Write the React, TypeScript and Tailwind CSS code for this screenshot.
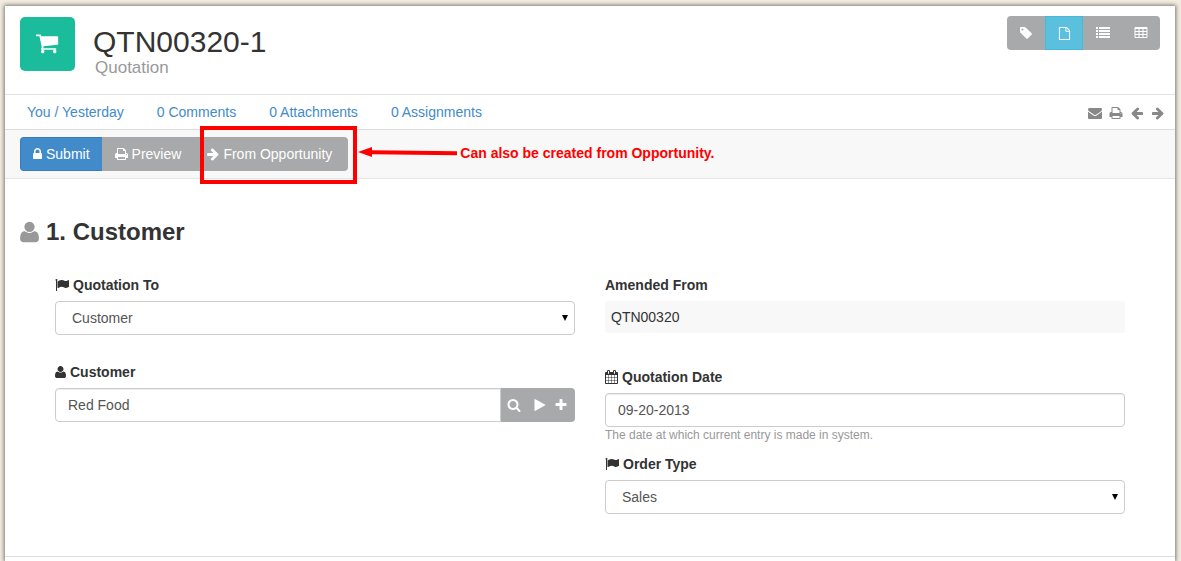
import type { ReactNode } from "react";

type IconProps = { className: string; viewBox?: string; d: string; transform?: string };

function Icon({ className, viewBox = "0 0 1792 1792", d, transform }: IconProps) {
  return (
    <svg className={className} viewBox={viewBox} fill="currentColor" overflow="visible" aria-hidden="true">
      <path d={d} transform={transform} />
    </svg>
  );
}

const CART =
  "M704 1536q0 52-38 90t-90 38-90-38-38-90 38-90 90-38 90 38 38 90zm896 0q0 52-38 90t-90 38-90-38-38-90 38-90 90-38 90 38 38 90zm128-1088v512q0 24-16.5 42.5t-40.5 21.5l-1044 122q13 60 13 70 0 16-24 64h920q26 0 45 19t19 45-19 45-45 19h-1024q-26 0-45-19t-19-45q0-11 8-31.5t16-36 21.5-40 15.5-29.5l-177-823h-204q-26 0-45-19t-19-45 19-45 45-19h256q16 0 28.5 6.5t19.5 15.5 13 24.5 8 26 5.5 29.5 4.5 26h1201q26 0 45 19t19 45z";
const TAG =
  "M576 448q0-53-37.5-90.5t-90.5-37.5-90.5 37.5-37.5 90.5 37.5 90.5 90.5 37.5 90.5-37.5 37.5-90.5zm1067 576q0 53-37 90l-491 492q-39 37-91 37-53 0-90-37l-715-716q-38-37-64.5-101t-26.5-117v-416q0-52 38-90t90-38h416q53 0 117 26.5t102 64.5l715 714q37 39 37 91z";
const FILE =
  "M1596 380q28 28 48 76t20 88v1152q0 40-28 68t-68 28h-1344q-40 0-68-28t-28-68v-1600q0-40 28-68t68-28h896q40 0 88 20t76 48zm-444-244v376h376q-10-29-22-41l-313-313q-12-12-41-22zm384 1528v-1024h-416q-40 0-68-28t-28-68v-416h-768v1536h1280z";
const LIST =
  "M0 128h256v256h-256zM384 128h1408v256h-1408zM0 512h256v256h-256zM384 512h1408v256h-1408zM0 896h256v256h-256zM384 896h1408v256h-1408zM0 1280h256v256h-256zM384 1280h1408v256h-1408z";
const CELL = "v-192q0-14-9-23t-23-9h-320q-14 0-23 9t-9 23v192q0 14 9 23t23 9h320q14 0 23-9t9-23z";
const TABLE =
  [576, 1088, 1600].map((x) => [608, 992, 1376].map((y) => `M${x} ${y}${CELL}`).join("")).join("") +
  "M1728 288v1088q0 66-47 113t-113 47h-1344q-66 0-113-47t-47-113v-1088q0-66 47-113t113-47h1344q66 0 113 47t47 113z";
const MAIL =
  "M1792 710v794q0 66-47 113t-113 47h-1472q-66 0-113-47t-47-113v-794q44 49 101 87 362 246 497 345 57 42 92.5 65.5t94.5 48 110 24.5h2q51 0 110-24.5t94.5-48 92.5-65.5q170-123 498-345 57-39 100-87zm0-294q0 79-49 151t-122 123q-376 261-468 325-10 7-42.5 31t-54 38.5-52 32.5-57.5 27-50 9h-2q-23 0-50-9t-57.5-27-52-32.5-54-38.5-42.5-31q-91-64-262-182.5t-205-142.5q-62-42-117-115.5t-55-136.5q0-78 41.5-130t118.5-52h1472q65 0 112.5 47t47.500 113z";
const PRINT =
  "M448 1536h896v-256h-896v256zm0-640h896v-384h-160q-40 0-68-28t-28-68v-160h-640v640zm1152 64q0-26-19-45t-45-19-45 19-19 45 19 45 45 19 45-19 19-45zm128 0v416q0 13-9.5 22.5t-22.5 9.5h-224v160q0 40-28 68t-68 28h-960q-40 0-68-28t-28-68v-160h-224q-13 0-22.5-9.5t-9.5-22.5v-416q0-79 56.5-135.5t135.5-56.5h64v-544q0-40 28-68t68-28h672q40 0 88 20t76 48l152 152q28 28 48 76t20 88v256h64q79 0 135.5 56.5t56.5 135.5z";
const LEFT =
  "M1664 896v128q0 53-32.5 90.5t-84.5 37.5h-704l293 294q38 36 38 90t-38 90l-75 76q-37 37-90 37-52 0-91-37l-651-652q-37-37-37-90 0-52 37-91l651-650q38-38 91-38 52 0 90 38l75 74q38 38 38 91t-38 91l-293 293h704q52 0 84.5 37.5t32.5 90.5z";
const RIGHT =
  "M1600 960q0 54-37 91l-651 651q-39 37-91 37-51 0-90-37l-75-75q-38-38-38-91t38-91l293-293h-704q-52 0-84.5-37.5t-32.5-90.5v-128q0-53 32.5-90.5t84.5-37.5h704l-293-294q-38-36-38-90t38-90l75-75q38-38 90-38 53 0 91 38l651 651q37 35 37 90z";
const LOCK =
  "M640 768h512v-192q0-106-75-181t-181-75-181 75-75 181v192zm832 96v576q0 40-28 68t-68 28h-960q-40 0-68-28t-28-68v-576q0-40 28-68t68-28h32v-192q0-184 132-316t316-132 316 132 132 316v192h32q40 0 68 28t28 68z";
const USER =
  "M0 131q0 53 3.5 103.5t14 109t26.500 108.500t43 97.500t62 81t85.500 53.500t111.500 20q9 0 42 -21.500t74.500 -48t108 -48t133.500 -21.500t133.500 21.500t108 48t74.500 48t42 21.500q61 0 111.500 -20t85.500 -53.500t62 -81t43 -97.500t26.500 -108.500t14 -109t3.500 -103.500q0 -120 -73 -189.500t-194 -69.500h-874q-121 0 -194 69.500t-73 189.500zM320 1024q0 159 112.500 271.500t271.500 112.500t271.500 -112.500t112.500 -271.500t-112.500 -271.500t-271.500 -112.500t-271.500 112.500t-112.500 271.500z";
const FLAG =
  "M320 256q0 72-64 110v1266q0 13-9.500 22.500t-22.500 9.500h-64q-13 0-22.500-9.500t-9.500-22.500v-1266q-64-38-64-110 0-53 37.500-90.500t90.500-37.500 90.500 37.500 37.500 90.500zm1472 64v763q0 25-12.500 38.500t-39.500 27.500q-215 116-369 116-61 0-123.500-22t-108.500-48-115.500-48-142.500-22q-192 0-464 146-17 9-33 9-26 0-45-19t-19-45v-742q0-32 31-55 21-14 79-43 236-120 421-120 107 0 200 29t219 88q38 19 88 19 54 0 117.500-21t110-47 88-47 54.500-21q26 0 45 19t19 45z";
const CALENDAR =
  "M192 1664h288v-288h-288v288zm352 0h320v-288h-320v288zm-352-352h288v-320h-288v320zm352 0h320v-320h-320v320zm-352-384h288v-288h-288v288zm736 736h320v-288h-320v288zm-384-736h320v-288h-320v288zm768 736h288v-288h-288v288zm-384-352h320v-320h-320v320zm-352-864v-288q0-13-9.500-22.500t-22.500-9.500h-64q-13 0-22.500 9.500t-9.500 22.500v288q0 13 9.500 22.500t22.500 9.500h64q13 0 22.500-9.500t9.500-22.500zm736 864h288v-320h-288v320zm-384-384h320v-288h-320v288zm384 0h288v-288h-288v288zm32-480v-288q0-13-9.500-22.500t-22.500-9.500h-64q-13 0-22.500 9.500t-9.500 22.500v288q0 13 9.500 22.500t22.500 9.500h64q13 0 22.500-9.500t9.500-22.500zm384-64v1280q0 52-38 90t-90 38h-1408q-52 0-90-38t-38-90v-1280q0-52 38-90t90-38h128v-96q0-66 47-113t113-47h64q66 0 113 47t47 113v96h384v-96q0-66 47-113t113-47h64q66 0 113 47t47 113v96h128q52 0 90 38t38 90z";
const SEARCH =
  "M1216 832q0-185-131.5-316.5t-316.5-131.5-316.5 131.5-131.5 316.500 131.500 316.500 316.500 131.500 316.500-131.500 131.500-316.500zm512 832q0 52-38 90t-90 38q-54 0-90-38l-343-342q-179 124-399 124-143 0-273.500-55.500t-225-150-150-225-55.500-273.500 55.500-273.500 150-225 225-150 273.500-55.500 273.500 55.500 225 150 150 225 55.500 273.500q0 220-124 399l343 343q37 37 37 90z";
const PLAY =
  "M1576 927l-1328 738q-23 13-39.500 3t-16.500-36v-1472q0-26 16.500-36t39.500 3l1328 738q23 13 23 31t-23 31z";
const PLUS =
  "M1600 736v192q0 40-28 68t-68 28h-416v416q0 40-28 68t-68 28h-192q-40 0-68-28t-28-68v-416h-416q-40 0-68-28t-28-68v-192q0-40 28-68t68-28h416v-416q0-40 28-68t68-28h192q40 0 68 28t28 68v416h416q40 0 68 28t28 68z";

const flipUp = "translate(0 1536) scale(1 -1)";
const control =
  "block h-[34px] w-full border border-[#ccc] bg-white text-[14px] text-[#555] shadow-[inset_0_1px_1px_rgba(0,0,0,0.075)] outline-none";

function Label({ htmlFor, icon, children }: { htmlFor: string; icon?: ReactNode; children: ReactNode }) {
  return (
    <label htmlFor={htmlFor} className="mb-1.5 flex h-5 items-center gap-1 text-[14px] font-bold">
      {icon}
      {children}
    </label>
  );
}

function Select({ id, options }: { id: string; options: string[] }) {
  return (
    <div className="relative">
      <select
        id={id}
        className="block h-[34px] w-full appearance-none rounded border border-[#ccc] bg-white pl-4 text-[14px] text-[#555] outline-none"
      >
        {options.map((o) => (
          <option key={o}>{o}</option>
        ))}
      </select>
      <svg className="pointer-events-none absolute top-[13px] right-[7px] h-[7px] w-[6px]" viewBox="0 0 6 7" aria-hidden="true">
        <path d="M0 1h6l-3 6z" fill="#000" />
      </svg>
    </div>
  );
}

const flagIcon = <Icon className="h-3.5 w-3.5" d={FLAG} />;

export default function App() {
  return (
    <div className="min-h-screen bg-[#f3ece1] pt-1.5 pr-1.5 pl-[5px] font-['Liberation_Sans',Arial,sans-serif] text-[14px] text-[#333]">
      <main className="min-h-[calc(100vh-6px)] bg-white shadow-[0_0_4px_1px_rgba(0,0,0,0.5)]">
        <header className="flex h-[89px] items-start justify-between border-b border-[#e3e3e3] px-[15px] pt-2.5">
          <div className="flex">
            <div className="mt-px flex h-[54px] w-[55px] items-center justify-center rounded-[5px] bg-[#1abc9c] pr-0.5 pb-0.5 text-white">
              <Icon className="h-6 w-6" d={CART} />
            </div>
            <div className="ml-[18px] pt-2.5">
              <h1 className="text-[30px] leading-8">QTN00320-1</h1>
              <p className="pl-0.5 text-[17px] leading-5 text-[#999]">Quotation</p>
            </div>
          </div>
          <div className="flex h-[34px] overflow-hidden rounded bg-[#a7a9aa] text-white">
            <button aria-label="Tags" className="flex w-[38px] items-center justify-center">
              <Icon className="h-3.5 w-3.5" d={TAG} />
            </button>
            <button aria-label="Form" className="flex w-[38px] items-center justify-center border border-[#46b8da] bg-[#5bc0de]">
              <Icon className="h-[13px] w-[13px]" d={FILE} />
            </button>
            <button aria-label="List" className="flex w-[39px] items-center justify-center">
              <Icon className="h-3.5 w-3.5" d={LIST} />
            </button>
            <button aria-label="Report" className="flex w-[38px] items-center justify-center">
              <Icon className="h-3.5 w-3.5" d={TABLE} />
            </button>
          </div>
        </header>

        <nav className="flex h-[35px] items-center justify-between border-b border-[#ddd] pr-2.5 pl-[22px]">
          <div className="flex gap-[33px] text-[#428bca]">
            <a href="#history">You / Yesterday</a>
            <a href="#comments">0 Comments</a>
            <a href="#attachments">0 Attachments</a>
            <a href="#assignments">0 Assignments</a>
          </div>
          <div className="flex gap-[7px] pt-0.5 text-[#888]">
            <a href="#email" aria-label="Email"><Icon className="h-3.5 w-3.5" d={MAIL} /></a>
            <a href="#print" aria-label="Print"><Icon className="h-3.5 w-3.5" d={PRINT} /></a>
            <a href="#previous" aria-label="Previous"><Icon className="h-3.5 w-3.5" d={LEFT} /></a>
            <a href="#next" aria-label="Next"><Icon className="h-3.5 w-3.5" d={RIGHT} /></a>
          </div>
        </nav>

        <div className="flex h-[49px] items-center border-b border-[#e5e5e5] bg-[#f8f8f8] pl-[15px]">
          <div className="flex h-[34px] text-white">
            <button className="flex items-center gap-1 rounded-l border border-r-0 border-[#357ebd] bg-[#428bca] px-3">
              <Icon className="h-3.5 w-[9px]" viewBox="320 0 1152 1792" d={LOCK} />
              Submit
            </button>
            <button className="flex items-center gap-1 bg-[#a7a9aa] pr-3.5 pl-[13px]">
              <Icon className="h-3.5 w-[13px]" viewBox="64 0 1664 1792" d={PRINT} />
              Preview
            </button>
            <div className="relative flex">
              <button className="flex items-center gap-1 rounded-r bg-[#a7a9aa] pr-4 pl-3">
                <Icon className="h-3.5 w-3" viewBox="128 0 1536 1792" d={RIGHT} />
                From Opportunity
              </button>
              <div className="pointer-events-none absolute -top-[11px] -right-[9px] -bottom-[13px] left-[5px] border-4 border-[#f00]" />
            </div>
          </div>
          <div className="flex items-center pb-0.5">
            <svg className="ml-[10px] h-3 w-[99px]" viewBox="0 0 99 12" aria-hidden="true">
              <path d="M0 5l14-5v3.200l85 1v4l-85-1v2.800z" fill="#f00" />
            </svg>
            <p className="ml-[3px] text-[14px] font-bold text-[#f00]">Can also be created from Opportunity.</p>
          </div>
        </div>

        <section className="border-b border-[#ddd] pb-[42px]">
          <h2 className="flex items-center gap-[7px] pt-[39px] pl-[15px] text-[24px] leading-7 font-bold">
            <Icon className="h-6 w-[19px] text-[#999]" viewBox="0 0 1408 1792" d={USER} transform={flipUp} />
            1. Customer
          </h2>
          <div className="mt-[29px] grid grid-cols-2 gap-[30px] px-[50px]">
            <div>
              <Label htmlFor="quotation-to" icon={flagIcon}>Quotation To</Label>
              <Select id="quotation-to" options={["Customer", "Lead"]} />
              <div className="mt-[27px]">
                <Label
                  htmlFor="customer"
                  icon={<Icon className="h-3.5 w-[11px]" viewBox="0 0 1408 1792" d={USER} transform={flipUp} />}
                >
                  Customer
                </Label>
                <div className="flex">
                  <input id="customer" defaultValue="Red Food" className={`${control} min-w-0 flex-1 rounded-l px-3`} />
                  <div className="flex h-[34px] w-[74px] rounded-r bg-[#a7a9aa] text-white">
                    <button aria-label="Search" className="flex w-[26px] items-center justify-center">
                      <Icon className="h-3.5 w-3.5" d={SEARCH} />
                    </button>
                    <button aria-label="Open" className="flex w-[26px] items-center justify-center">
                      <Icon className="h-3.5 w-3.5" d={PLAY} />
                    </button>
                    <button aria-label="New" className="flex flex-1 items-center pl-px">
                      <Icon className="h-3.5 w-3.5" d={PLUS} />
                    </button>
                  </div>
                </div>
              </div>
            </div>
            <div>
              <Label htmlFor="amended-from">Amended From</Label>
              <output id="amended-from" className="block h-8 rounded-[3px] bg-[#f8f8f8] px-1.5 leading-8">QTN00320</output>
              <div className="mt-[34px]">
                <Label htmlFor="quotation-date" icon={<Icon className="h-3.5 w-[13px]" viewBox="64 0 1664 1792" d={CALENDAR} />}>
                  Quotation Date
                </Label>
                <input id="quotation-date" defaultValue="09-20-2013" className={`${control} rounded px-3`} />
                <p className="text-[12px] leading-4 text-[#999]">The date at which current entry is made in system.</p>
              </div>
              <div className="mt-[11px]">
                <Label htmlFor="order-type" icon={flagIcon}>Order Type</Label>
                <Select id="order-type" options={["Sales", "Maintenance", "Shopping Cart"]} />
              </div>
            </div>
          </div>
        </section>
      </main>
    </div>
  );
}
